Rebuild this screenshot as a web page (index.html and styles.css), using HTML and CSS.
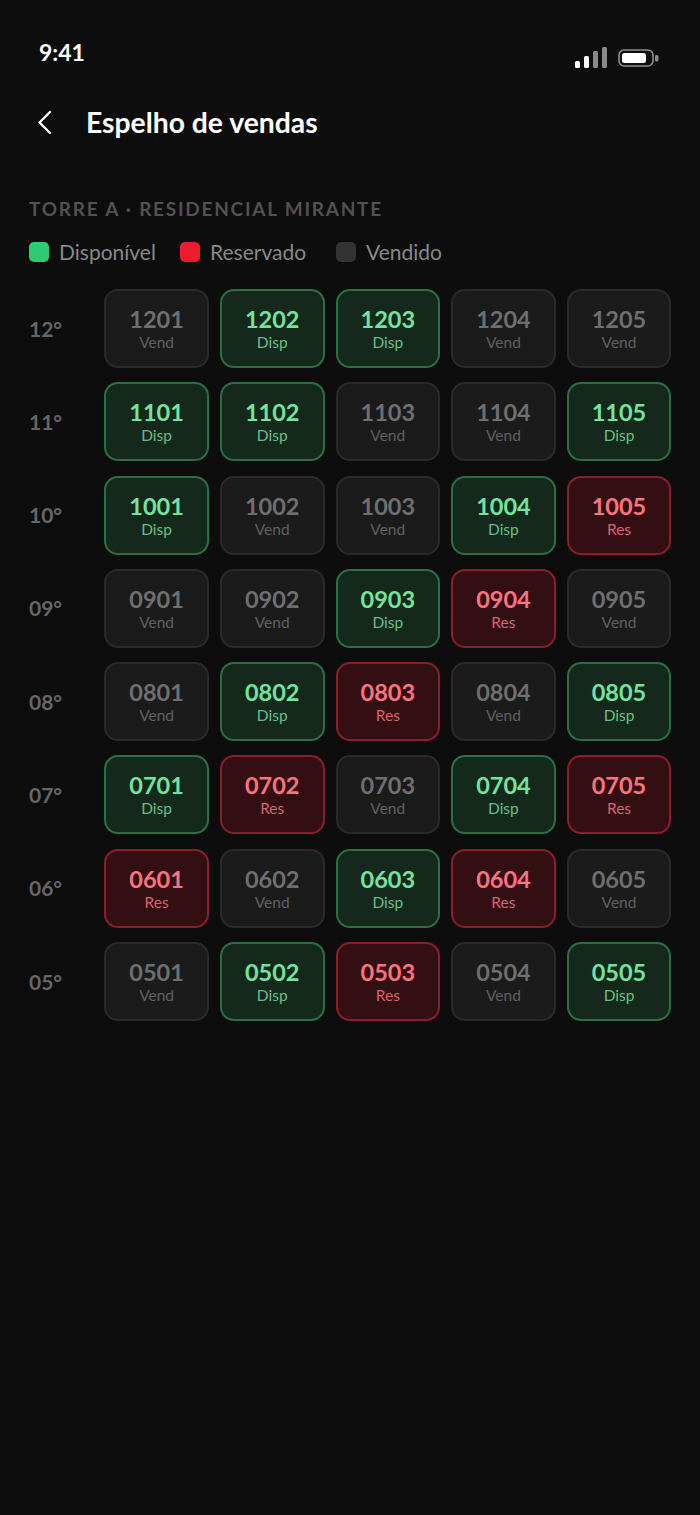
FILE: index.html
```html
<!DOCTYPE html>
<html lang="pt-BR">
<head>
<meta charset="utf-8">
<title>Espelho de vendas</title>
<link rel="stylesheet" href="styles.css">
</head>
<body>
<div class="screen">
  <div class="status">
    <span class="time">9:41</span>
    <span class="status-icons">
      <svg class="signal" width="33" height="22" viewBox="0 0 33 22"><rect x="0" y="14" width="5" height="7" rx="1.5" fill="#fff"/><rect x="9" y="9" width="5" height="12" rx="1.5" fill="#fff"/><rect x="18" y="4" width="5" height="17" rx="1.5" fill="#8a8a8a"/><rect x="27" y="0" width="5" height="21" rx="1.5" fill="#8a8a8a"/></svg>
      <svg class="battery" width="41" height="18" viewBox="0 0 41 18"><rect x="1" y="1" width="34" height="16" rx="5" fill="none" stroke="#8f8f8f" stroke-width="1.6"/><rect x="4" y="4" width="24" height="10" rx="2.5" fill="#fff"/><rect x="37" y="6" width="3.5" height="6.5" rx="1.5" fill="#8a8a8a"/></svg>
    </span>
  </div>
  <header class="header">
    <svg class="back" width="15" height="25" viewBox="0 0 15 25"><path d="M13 2 L2.5 12.5 L13 23" fill="none" stroke="#fff" stroke-width="2.4" stroke-linecap="round" stroke-linejoin="round"/></svg>
    <h1 class="title">Espelho de vendas</h1>
  </header>
  <div class="section-label">TORRE A · RESIDENCIAL MIRANTE</div>
  <div class="legend">
    <span class="legend-item"><i class="swatch swatch-d"></i>Disponível</span>
    <span class="legend-item"><i class="swatch swatch-r"></i>Reservado</span>
    <span class="legend-item"><i class="swatch swatch-v"></i>Vendido</span>
  </div>
  <div class="floors">
    <div class="floor"><div class="floor-label">12°</div>
      <div class="cell v"><b>1201</b><small>Vend</small></div><div class="cell d"><b>1202</b><small>Disp</small></div><div class="cell d"><b>1203</b><small>Disp</small></div><div class="cell v"><b>1204</b><small>Vend</small></div><div class="cell v"><b>1205</b><small>Vend</small></div></div>
    <div class="floor"><div class="floor-label">11°</div>
      <div class="cell d"><b>1101</b><small>Disp</small></div><div class="cell d"><b>1102</b><small>Disp</small></div><div class="cell v"><b>1103</b><small>Vend</small></div><div class="cell v"><b>1104</b><small>Vend</small></div><div class="cell d"><b>1105</b><small>Disp</small></div></div>
    <div class="floor"><div class="floor-label">10°</div>
      <div class="cell d"><b>1001</b><small>Disp</small></div><div class="cell v"><b>1002</b><small>Vend</small></div><div class="cell v"><b>1003</b><small>Vend</small></div><div class="cell d"><b>1004</b><small>Disp</small></div><div class="cell r"><b>1005</b><small>Res</small></div></div>
    <div class="floor"><div class="floor-label">09°</div>
      <div class="cell v"><b>0901</b><small>Vend</small></div><div class="cell v"><b>0902</b><small>Vend</small></div><div class="cell d"><b>0903</b><small>Disp</small></div><div class="cell r"><b>0904</b><small>Res</small></div><div class="cell v"><b>0905</b><small>Vend</small></div></div>
    <div class="floor"><div class="floor-label">08°</div>
      <div class="cell v"><b>0801</b><small>Vend</small></div><div class="cell d"><b>0802</b><small>Disp</small></div><div class="cell r"><b>0803</b><small>Res</small></div><div class="cell v"><b>0804</b><small>Vend</small></div><div class="cell d"><b>0805</b><small>Disp</small></div></div>
    <div class="floor"><div class="floor-label">07°</div>
      <div class="cell d"><b>0701</b><small>Disp</small></div><div class="cell r"><b>0702</b><small>Res</small></div><div class="cell v"><b>0703</b><small>Vend</small></div><div class="cell d"><b>0704</b><small>Disp</small></div><div class="cell r"><b>0705</b><small>Res</small></div></div>
    <div class="floor"><div class="floor-label">06°</div>
      <div class="cell r"><b>0601</b><small>Res</small></div><div class="cell v"><b>0602</b><small>Vend</small></div><div class="cell d"><b>0603</b><small>Disp</small></div><div class="cell r"><b>0604</b><small>Res</small></div><div class="cell v"><b>0605</b><small>Vend</small></div></div>
    <div class="floor"><div class="floor-label">05°</div>
      <div class="cell v"><b>0501</b><small>Vend</small></div><div class="cell d"><b>0502</b><small>Disp</small></div><div class="cell r"><b>0503</b><small>Res</small></div><div class="cell v"><b>0504</b><small>Vend</small></div><div class="cell d"><b>0505</b><small>Disp</small></div></div>
  </div>
</div>
</body>
</html>
```
FILE: styles.css
```css
* { box-sizing: border-box; }
html, body { margin: 0; padding: 0; background: #0d0d0e; }
body { font-family: "Lato", "Liberation Sans", sans-serif; }
.screen { width: 700px; height: 1515px; overflow: hidden; background: #0d0d0e; color: #fff; display: flex; flex-direction: column; }
.status { height: 42px; margin-top: 32px; padding: 0 41px 0 39px; display: flex; justify-content: space-between; align-items: flex-start; }
.time { font-size: 23px; font-weight: 700; line-height: 42px; margin-top: -1px; }
.status-icons { display: flex; align-items: center; gap: 10px; margin-top: 15px; }
.signal { display: block; }
.battery { display: block; }
.header { display: flex; align-items: center; height: 40px; margin-top: 28px; padding-left: 37px; }
.back { display: block; flex: none; }
.title { margin: 0 0 0 34px; font-size: 28.3px; font-weight: 700; line-height: 40px; }
.section-label { margin: 53px 0 0 29px; font-size: 19px; font-weight: 700; line-height: 28px; letter-spacing: 1.75px; color: #525253; }
.legend { display: flex; align-items: center; margin: 15px 0 0 29px; height: 28px; }
.legend-item { display: flex; align-items: center; font-size: 21px; color: #88888a; line-height: 28px; }
.legend-item:nth-child(1) { width: 151px; }
.legend-item:nth-child(2) { width: 156px; }
.swatch { display: block; width: 20px; height: 20px; border-radius: 5px; margin-right: 10px; }
.swatch-d { background: #2ecc71; }
.swatch-r { background: #ed1c2e; }
.swatch-v { background: #333334; }
.floors { display: flex; flex-direction: column; gap: 14.3px; margin-top: 23px; padding: 0 28.7px 0 29px; }
.floor { display: grid; grid-template-columns: 64.3px repeat(5, 1fr); column-gap: 11px; height: 79px; align-items: stretch; }
.floor-label { align-self: center; font-size: 21px; font-weight: 700; color: #666666; margin-top: -1px; }
.cell { border: 2px solid; border-radius: 14px; display: flex; flex-direction: column; align-items: center; justify-content: center; }
.cell b { font-size: 23.5px; font-weight: 700; line-height: 28px; }
.cell small { font-size: 15.5px; font-weight: 400; line-height: 20px; margin-top: -1px; }
.cell.v { background: #1b1b1c; border-color: #2a2a2b; }
.cell.v b { color: #6f6f70; }
.cell.v small { color: #606061; }
.cell.d { background: #14291c; border-color: #2b7043; }
.cell.d b { color: #74e3a0; }
.cell.d small { color: #63c088; }
.cell.r { background: #330f13; border-color: #8a1e2a; }
.cell.r b { color: #fb7482; }
.cell.r small { color: #d9636f; }
```
